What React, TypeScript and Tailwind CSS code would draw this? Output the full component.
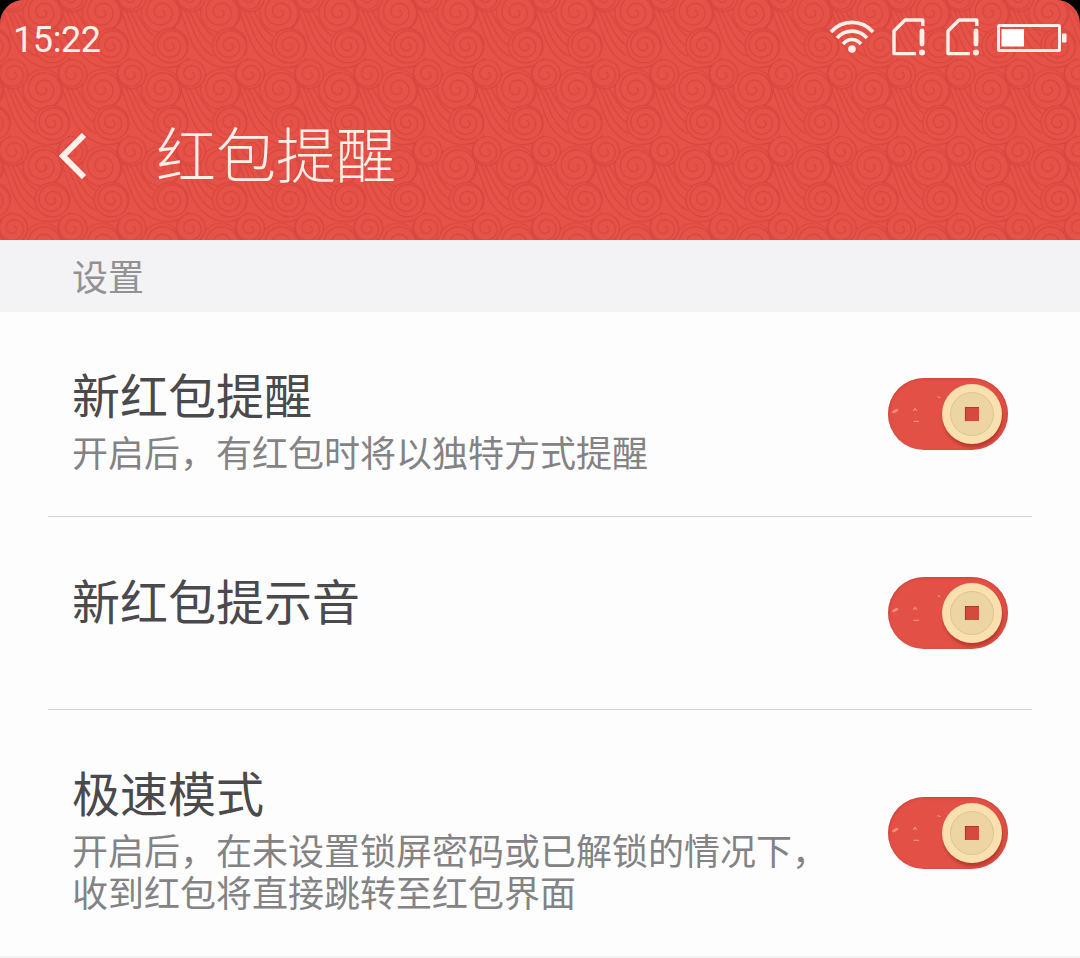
import { useState } from "react";

/* ------------------------------------------------------------------ */
/* Static data                                                         */
/* ------------------------------------------------------------------ */

const SETTINGS = [
  {
    title: "新红包提醒",
    detail: "开启后，有红包时将以独特方式提醒",
    row: "h-[205px] pt-[55px]",
    toggle: "mt-[11px]",
  },
  {
    title: "新红包提示音",
    detail: "",
    row: "h-[193px] pt-14",
    toggle: "mt-1",
  },
  {
    title: "极速模式",
    detail: "开启后，在未设置锁屏密码或已解锁的情况下，收到红包将直接跳转至红包界面",
    row: "h-[248px] pt-[55px]",
    toggle: "mt-8",
  },
];

/* ------------------------------------------------------------------ */
/* Header pattern                                                      */
/* ------------------------------------------------------------------ */

const TILE_W = 59.18;
const TILE_H = 77;

function spiral(cx: number, cy: number, radius: number, turns: number) {
  const steps = Math.round(turns * 24);
  const pts: string[] = [];
  for (let i = 0; i <= steps; i++) {
    const a = (i / 24) * Math.PI * 2 - 1.2;
    const r = 2 + (radius - 2) * (i / steps);
    pts.push(`${(cx + r * Math.cos(a)).toFixed(2)} ${(cy + r * Math.sin(a)).toFixed(2)}`);
  }
  return `M${pts.join("L")}`;
}

function Curl({ cx, cy, r, turns }: { cx: number; cy: number; r: number; turns: number }) {
  return (
    <g>
      <circle cx={cx} cy={cy} r={r} fill="#e65248" />
      <path d={spiral(cx, cy, r, turns)} fill="none" />
    </g>
  );
}

const OFFSETS = [-1, 0, 1, 2].flatMap((y) => [-1, 0, 1, 2].map((x) => [x * TILE_W, y * TILE_H]));

function CloudPattern() {
  return (
    <svg className="absolute inset-0 h-full w-full" aria-hidden="true">
      <defs>
        <g id="waves" fill="none">
          <path d="M-40 -1C-33 17 -30 35 -17 46C-5 57 15 60 27 46" />
          <path d="M-36 -2C-28 12 -27 27 -14 39Q-10 43 -6 44" />
          <path d="M-32 -2C-25 8 -23 22 -9 33" />
          <path d="M-27 -3C-22 4 -18 17 -7 24" />
        </g>
        <g id="curls">
          <Curl cx={0} cy={0} r={20} turns={2.4} />
          <Curl cx={9.3} cy={33.4} r={17.3} turns={2.3} />
          <Curl cx={-29.8} cy={-15} r={14.5} turns={1.8} />
        </g>
        <pattern id="clouds" width={TILE_W} height={TILE_H} patternUnits="userSpaceOnUse" patternTransform="translate(43 12.3)">
          <g stroke="#d6463e" strokeWidth="1.2">
            {OFFSETS.map(([x, y]) => (
              <use key={`w${x}-${y}`} href="#waves" x={x} y={y} />
            ))}
            {OFFSETS.map(([x, y]) => (
              <use key={`c${x}-${y}`} href="#curls" x={x} y={y} />
            ))}
          </g>
        </pattern>
      </defs>
      <rect width="100%" height="100%" fill="url(#clouds)" />
    </svg>
  );
}

/* ------------------------------------------------------------------ */
/* Status bar icons                                                    */
/* ------------------------------------------------------------------ */

function WifiIcon() {
  return (
    <svg width="46" height="36" viewBox="0 0 46 36" fill="none" stroke="#ffefe9" strokeWidth="3.6">
      <path d="M2 14C13 1.2 33 1.2 44 14" />
      <path d="M8 20C16 10.8 30 10.8 38 20" />
      <path d="M14 26C19 20 27 20 32 26" />
      <circle cx="23" cy="31" r="3.8" fill="#ffefe9" stroke="none" />
    </svg>
  );
}

function SimIcon() {
  return (
    <svg width="34" height="38" viewBox="0 0 34 38" fill="none" stroke="#ffefe9" strokeWidth="3.4">
      <path d="M30.8 8V2H13L2 13V35.6H24" strokeLinejoin="round" />
      <path d="M30 13V26" strokeWidth="4.8" strokeLinecap="round" />
      <circle cx="30" cy="34.4" r="3" fill="#ffefe9" stroke="none" />
    </svg>
  );
}

function BatteryIcon() {
  return (
    <svg width="70" height="28" viewBox="0 0 70 28" fill="none">
      <rect x="1.5" y="1.5" width="61" height="25" rx="1" stroke="#ffefe9" strokeWidth="3" />
      <rect x="4.5" y="5" width="22.5" height="17.5" fill="#ffffff" />
      <rect x="65" y="9.5" width="4.5" height="9" rx="1" fill="#ffefe9" />
    </svg>
  );
}

/* ------------------------------------------------------------------ */
/* Coin toggle                                                         */
/* ------------------------------------------------------------------ */

function CoinToggle({ label, className }: { label: string; className: string }) {
  const [on, setOn] = useState(true);
  const coinShift = on ? 0 : -48;

  return (
    <button
      type="button"
      role="switch"
      aria-checked={on}
      aria-label={label}
      onClick={() => setOn(!on)}
      className={`h-[72px] w-[120px] shrink-0 rounded-full ${on ? "bg-[#e35146]" : "bg-gray-300"} ${className}`}
    >
      <svg width="120" height="72" viewBox="0 0 120 72">
        <defs>
          <clipPath id="track">
            <rect width="120" height="72" rx="36" />
          </clipPath>
          <filter id="soft" x="-30%" y="-30%" width="160%" height="160%">
            <feGaussianBlur stdDeviation="1.8" />
          </filter>
        </defs>
        <g clipPath="url(#track)">
          <rect x="-1" y="-1" width="122" height="76" rx="37" fill="none" stroke="#b83c35" strokeWidth="3" filter="url(#soft)" opacity="0.8" />
          <circle cx={85 + coinShift} cy="39.5" r="30" fill="#a93228" filter="url(#soft)" opacity="0.75" />
        </g>
        {on && (
          <g fill="none" stroke="#f58c80" strokeWidth="1.2" strokeLinecap="round">
            <path d="M5.5 34L9 32.2" strokeWidth="2.6" />
            <path d="M25.5 32.5L27 30.5L28.5 32.5" />
            <path d="M26 43.3H30.5" />
            <path d="M50 18.7L52 19.5" />
          </g>
        )}
        <g transform={`translate(${coinShift} 0)`}>
          <circle cx="84" cy="36" r="30" fill="#fae0af" />
          <circle cx="84" cy="36" r="21.5" fill="#edd5a3" stroke="#d9c594" strokeWidth="1" />
          <rect x="77" y="29" width="14" height="14" fill="#d44b3b" />
          <path d="M77.5 43V29.5H91" fill="none" stroke="#a83b2d" strokeWidth="1.2" />
        </g>
      </svg>
    </button>
  );
}

/* ------------------------------------------------------------------ */
/* Page                                                                */
/* ------------------------------------------------------------------ */

export default function App() {
  return (
    <div className="h-[958px] w-[1080px] overflow-hidden bg-black font-['Noto_Sans_CJK_SC',sans-serif]">
      {/* Header */}
      <header className="relative h-60 overflow-hidden rounded-t-[24px] bg-[#e65248] text-[#ffefe9]">
        <CloudPattern />
        <div className="relative flex h-[78px] items-start justify-between px-[13px]">
          <span className="pt-[19px] font-['Roboto',sans-serif] text-[36px] leading-[42px] tracking-[-0.4px]">15:22</span>
          <div className="flex items-start pt-[18px]">
            <WifiIcon />
            <div className="ml-[17px] flex gap-5">
              <SimIcon />
              <SimIcon />
            </div>
            <div className="mt-1.5 ml-[17px]">
              <BatteryIcon />
            </div>
          </div>
        </div>
        <div className="relative flex h-[156px] items-center pl-[59px]">
          <svg width="32" height="46" viewBox="0 0 32 46" fill="none" stroke="#fff1eb" strokeWidth="6">
            <path d="M25 2L4 23L25 44" />
          </svg>
          <h1 className="-mt-[9px] ml-[65px] text-[60px] leading-none font-light">红包提醒</h1>
        </div>
      </header>

      {/* Section label */}
      <div className="flex h-[72px] items-center bg-[#f3f2f4] pb-[3px] pl-[72px] text-[36px] leading-none text-[#929194]">设置</div>

      {/* Settings list */}
      <main className="bg-[#fefdfe] px-12">
        {SETTINGS.map((s, i) => (
          <section
            key={s.title}
            className={`flex items-start justify-between ${s.row} ${
              i < SETTINGS.length - 1 ? "border-b border-[#d3d3d6] px-6" : "-mx-12 border-b-2 border-[#f3f2f4] px-[72px]"
            }`}
          >
            <div className="w-[760px]">
              <h2 className="text-[48px] leading-[52px] text-[#4a494b]">{s.title}</h2>
              {s.detail && <p className="mt-[11px] text-[36px] leading-[42px] text-[#838284]">{s.detail}</p>}
            </div>
            <CoinToggle label={s.title} className={s.toggle} />
          </section>
        ))}
      </main>
    </div>
  );
}
